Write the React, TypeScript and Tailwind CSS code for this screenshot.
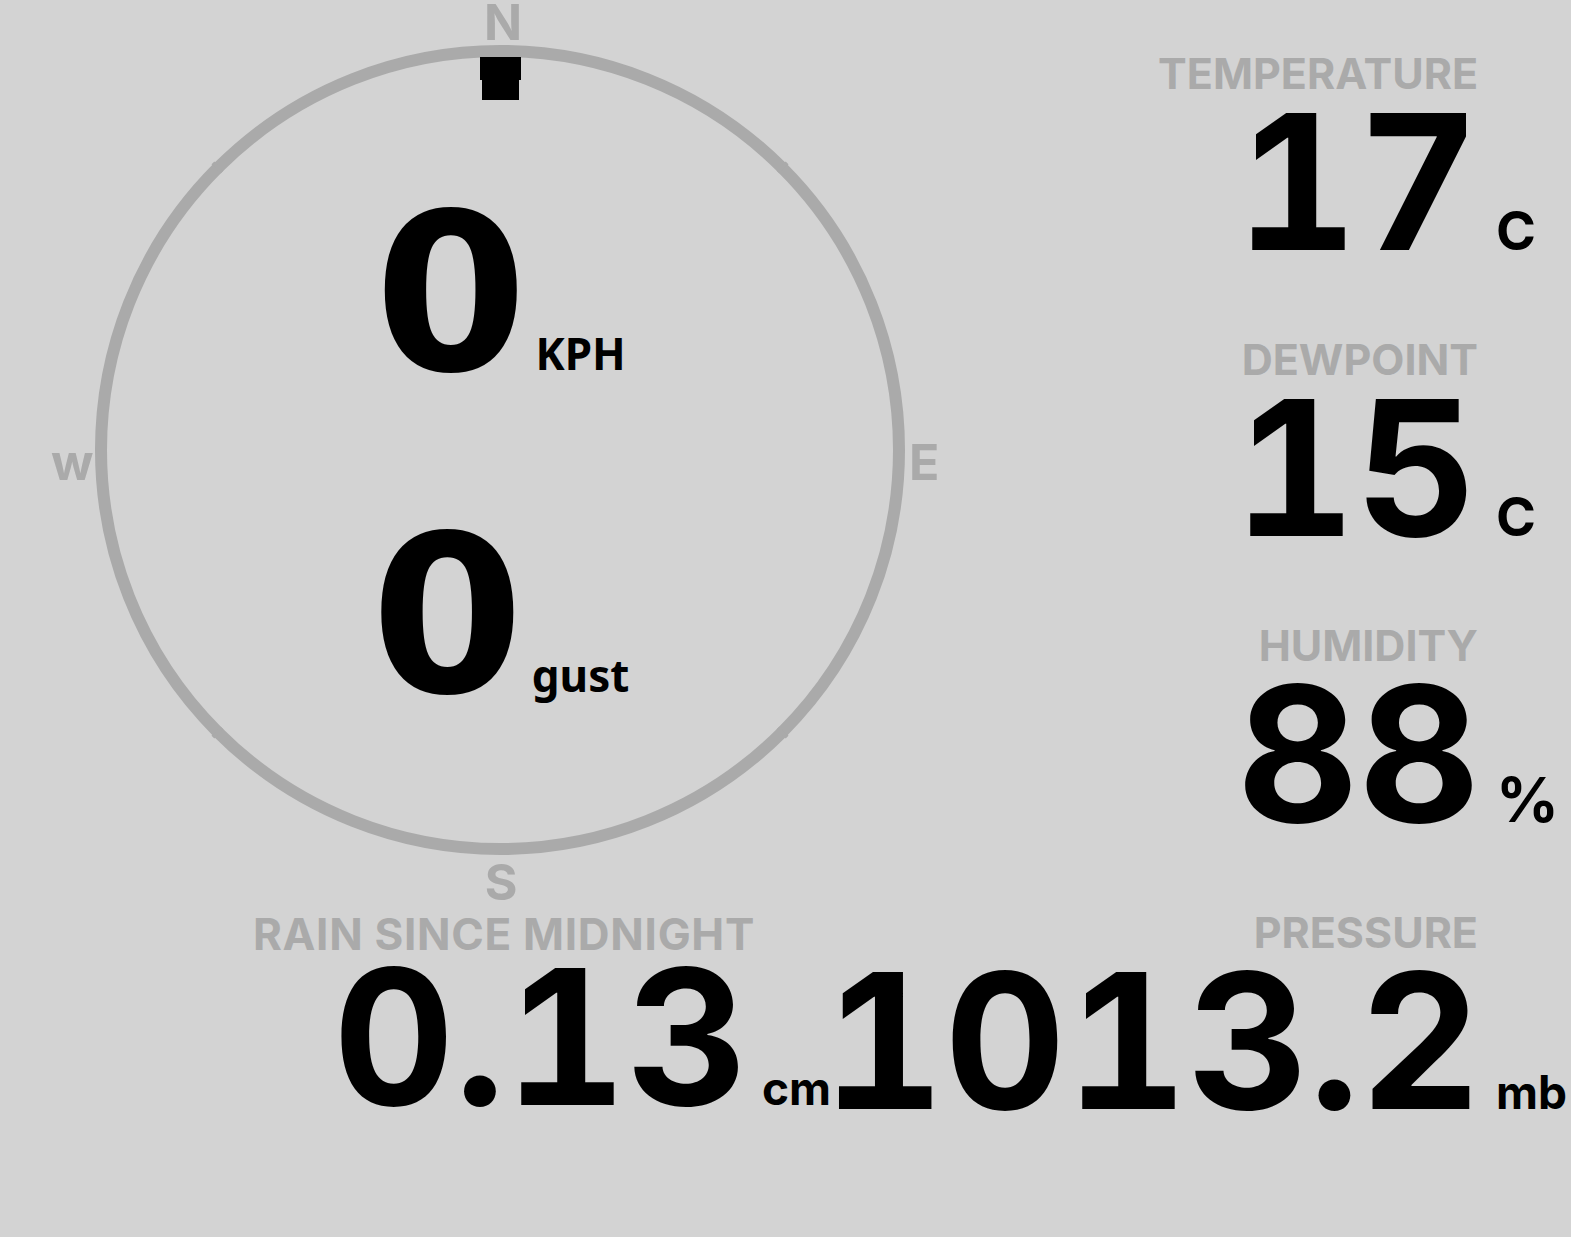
import React from 'react';

type Reading = {
  label: string;
  value: string;
  unit: string;
  unitClass: string;
};

const READINGS: Reading[] = [
  { label: 'TEMPERATURE', value: '17', unit: 'C', unitClass: 'text-[54px] pl-[17px]' },
  { label: 'DEWPOINT', value: '15', unit: 'C', unitClass: 'text-[54px] pl-[19px]' },
  { label: 'HUMIDITY', value: '88', unit: '%', unitClass: 'text-[62px] pl-[16px]' },
  { label: 'PRESSURE', value: '1013.2', unit: 'mb', unitClass: 'text-[46px] pl-[15px]' },
];

const ReadingBlock = ({ reading }: { reading: Reading }) => (
  <div className="flex flex-col items-end whitespace-nowrap">
    <div className="text-[43px] leading-none font-bold text-[#aaaaaa]">{reading.label}</div>
    <div className="mt-[12px] -mr-[18px] flex items-baseline">
      <span className="text-[188px] leading-[150px] font-bold tabular-nums text-black">{reading.value}</span>
      <span className={`inline-block w-0 leading-none font-bold text-black ${reading.unitClass}`}>
        {reading.unit}
      </span>
    </div>
  </div>
);

const SpeedRow = ({ value, unit }: { value: string; unit: string }) => (
  <div className="flex items-baseline leading-[322px]">
    <span className="font-['DejaVu_Sans',sans-serif] text-[220px] font-bold text-black">{value}</span>
    <span className="ml-2 font-['Noto_Sans',sans-serif] text-[44px] leading-none font-bold text-black">
      {unit}
    </span>
  </div>
);

// ring, pointer and the little 45° notches
const Dial = () => {
  const ticks = [45, 135, 225, 315].map((deg) => {
    const a = (deg * Math.PI) / 180;
    const x1 = 405 + Math.sin(a) * 393;
    const y1 = 405 - Math.cos(a) * 393;
    const x2 = 405 + Math.sin(a) * 406;
    const y2 = 405 - Math.cos(a) * 406;
    return <line key={deg} x1={x1} y1={y1} x2={x2} y2={y2} stroke="#aaaaaa" strokeWidth={4} />;
  });
  return (
    <svg width="810" height="810" viewBox="0 0 810 810" className="absolute inset-0">
      <circle cx="405" cy="405" r="399" fill="none" stroke="#aaaaaa" strokeWidth="12" />
      {ticks}
      <path d="M385 12 H426 V35 H424 V55 H387 V35 H385 Z" fill="#000" />
    </svg>
  );
};

const Compass = () => (
  <div className="relative ml-[95px] mt-[45px] h-[810px] w-[810px] shrink-0">
    <Dial />
    <span className="absolute top-[-43px] left-[408px] -translate-x-1/2 text-[50px] leading-[40px] font-bold text-[#aaaaaa]">
      N
    </span>
    <span className="absolute top-[392px] left-[814px] text-[50px] leading-none font-bold text-[#aaaaaa]">E</span>
    <span className="absolute top-[392px] left-[-44px] text-[50px] leading-none font-bold text-[#aaaaaa]">w</span>
    <span className="absolute top-[812px] left-[406px] -translate-x-1/2 text-[50px] leading-none font-bold text-[#aaaaaa]">
      S
    </span>
    <div className="relative flex flex-col items-center pt-[88px]">
      <SpeedRow value="0" unit="KPH" />
      <SpeedRow value="0" unit="gust" />
    </div>
  </div>
);

export default function App() {
  return (
    <div className="min-h-screen w-full overflow-hidden bg-[#d3d3d3] font-['Inter',sans-serif]">
      <div className="flex">
        <div className="flex w-[905px] shrink-0 flex-col">
          <Compass />
          <div className="mt-[57px] flex w-[755px] flex-col items-end whitespace-nowrap">
            <div className="text-[44px] leading-none font-bold tracking-[0.7px] text-[#aaaaaa]">RAIN SINCE MIDNIGHT</div>
            <div className="mt-[6px] -mr-[7px] flex items-baseline">
              <span className="text-[188px] leading-[150px] font-bold tabular-nums text-black">0.13</span>
              <span className="inline-block w-0 pl-[14px] text-[46px] leading-none font-bold text-black">cm</span>
            </div>
          </div>
        </div>
        <div className="flex min-w-0 flex-1 flex-col items-end gap-[80px] pt-[52px] pr-[93px]">
          {READINGS.map((r) => (
            <ReadingBlock key={r.label} reading={r} />
          ))}
        </div>
      </div>
    </div>
  );
}
